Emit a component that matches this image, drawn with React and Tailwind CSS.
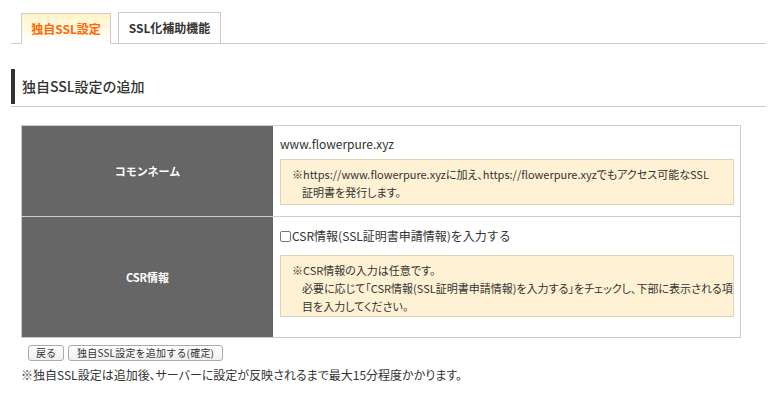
export default function App() {
  const font = { fontFamily: '"Noto Sans CJK JP", "Noto Sans", sans-serif' };
  return (
    <div className="w-[782px] h-[397px] bg-white text-[#333]" style={font}>
      <div className="pl-[11px] pr-[16px] pt-[13px]">
        {/* tabs */}
        <div className="flex items-end gap-[7px] pl-[10px] border-b border-[#cccccc] h-[31px]">
          <div className="w-[90px] h-[31px] -mb-px border border-[#cccccc] border-b-white bg-gradient-to-b from-[#fff4c8] to-white flex items-center justify-center text-[12px] font-bold text-[#ff6600]">
            独自SSL設定
          </div>
          <div className="w-[103px] h-[31px] border border-[#cccccc] border-b-0 bg-white flex items-center justify-center text-[12px] font-bold text-[#333]">
            SSL化補助機能
          </div>
        </div>

        {/* heading */}
        <div className="mt-[25px] border-b border-[#cccccc] pb-[2px]">
          <div className="border-l-4 border-[#333] h-[35px] flex items-center pl-[7px] text-[14px] font-medium text-[#333]">
            独自SSL設定の追加
          </div>
        </div>

        {/* table */}
        <div className="ml-[10px] mt-[18px] w-[720px] border border-[#cccccc] grid grid-cols-[251px_1fr]">
          <div className="bg-[#666666] h-[90px] flex items-center justify-center text-white text-[11px] font-bold">
            コモンネーム
          </div>
          <div className="h-[90px] px-[7px] pt-[9px]">
            <div className="text-[12px] leading-[18px] text-[#333]">www.flowerpure.xyz</div>
            <div className="mt-[6px] w-[454px] h-[46px] bg-[#fff2d4] border border-[#ddd3b8] pl-[11px] pt-[5px] text-[11px] leading-[18px] text-[#333] whitespace-nowrap [font-feature-settings:'palt']">
              <div>※https://www.flowerpure.xyzに加え、https://flowerpure.xyzでもアクセス可能なSSL</div>
              <div className="pl-[10px]">証明書を発行します。</div>
            </div>
          </div>
          <div className="col-span-2 h-px bg-[#cccccc]"></div>
          <div className="bg-[#666666] h-[120px] flex items-center justify-center text-white text-[11px] font-bold">
            CSR情報
          </div>
          <div className="h-[120px] px-[7px] pt-[10px]">
            <label className="flex items-center text-[12px] leading-[18px] text-[#333]">
              <span className="inline-block w-[11px] h-[11px] border border-[#777] rounded-[2px] bg-white mr-[1px]"></span>
              CSR情報(SSL証明書申請情報)を入力する
            </label>
            <div className="mt-[10px] w-[454px] h-[62px] bg-[#fff2d4] border border-[#ddd3b8] pl-[11px] pt-[5px] text-[11px] leading-[18px] text-[#333] whitespace-nowrap [font-feature-settings:'palt']">
              <div>※CSR情報の入力は任意です。</div>
              <div className="pl-[10px]">必要に応じて「CSR情報(SSL証明書申請情報)を入力する」をチェックし、下部に表示される項</div>
              <div className="pl-[10px]">目を入力してください。</div>
            </div>
          </div>
        </div>

        {/* buttons */}
        <div className="ml-[17px] mt-[7px] flex gap-[4px]">
          <button className="h-[16px] px-[7px] border border-[#aaaaaa] rounded-[3px] bg-gradient-to-b from-white to-[#f0f0f0] text-[10px] leading-[14px] text-[#333]">
            戻る
          </button>
          <button className="h-[16px] px-[8px] border border-[#aaaaaa] rounded-[3px] bg-gradient-to-b from-white to-[#f0f0f0] text-[10px] leading-[14px] text-[#333] tracking-[0.2px]">
            独自SSL設定を追加する(確定)
          </button>
        </div>
        <div className="ml-[10px] mt-[5px] text-[12px] leading-[18px] text-[#333] [font-feature-settings:'palt']">
          ※独自SSL設定は追加後、サーバーに設定が反映されるまで最大15分程度かかります。
        </div>
      </div>
    </div>
  );
}
